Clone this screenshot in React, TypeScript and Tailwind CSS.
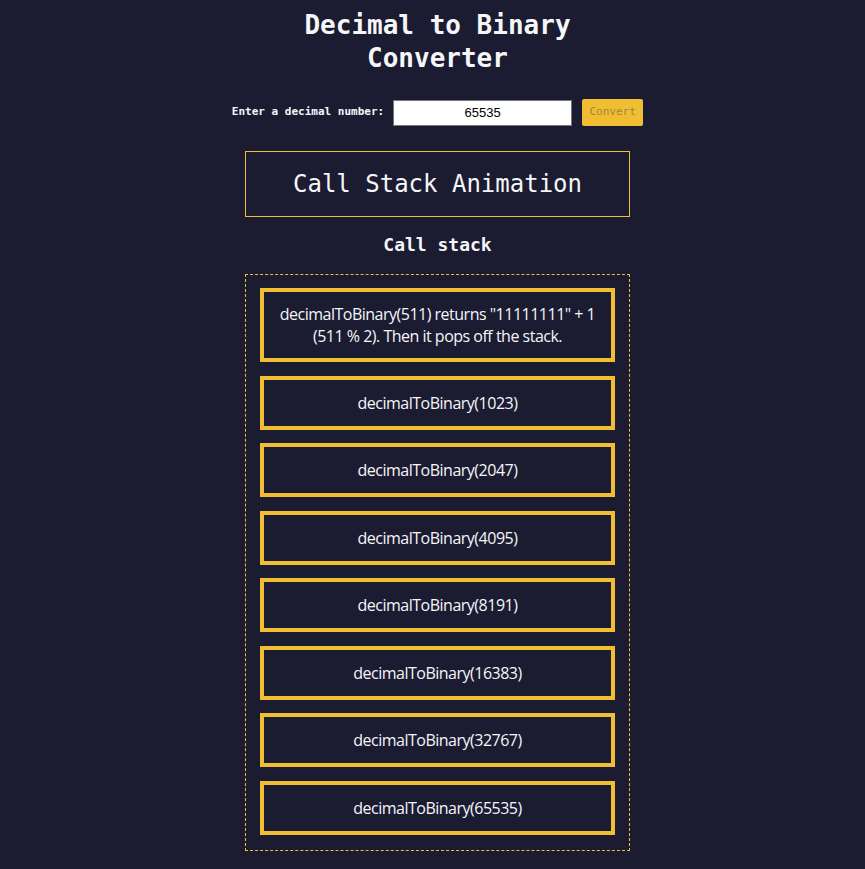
import React from 'react';

const frames = [1023, 2047, 4095, 8191, 16383, 32767, 65535];

const App = () => {
    return (
        <div className="min-h-screen w-full bg-[#1b1b32] text-[#f5f6f7] pl-[10px]">
            <main className="flex flex-col items-center">
                <h1 className="mt-[9px] max-w-[400px] text-center text-[26px] leading-[33px] font-bold font-['DejaVu_Sans_Mono',monospace]">
                    Decimal to Binary Converter
                </h1>

                {/* Input row */}
                <div className="mt-[24px] flex items-center">
                    <label className="text-[11px] font-semibold font-['DejaVu_Sans_Mono',monospace]">
                        Enter a decimal number:
                    </label>
                    <input
                        readOnly
                        value="65535"
                        className="ml-[9px] h-[26px] w-[179px] border border-[#767676] bg-white text-center text-[13px] text-black font-['Liberation_Sans',sans-serif] outline-none"
                    />
                    <button className="ml-[10px] h-[27px] w-[61px] rounded-[2px] bg-[#f1be32] text-[11px] text-[#9a8843] font-['DejaVu_Sans_Mono',monospace]">
                        Convert
                    </button>
                </div>

                {/* Animation box */}
                <div className="mt-[25px] flex h-[66px] w-[385px] items-center justify-center border border-[#f1be32]">
                    <p className="text-[24px] font-['DejaVu_Sans_Mono',monospace]">Call Stack Animation</p>
                </div>

                <h2 className="mt-[17px] text-[18px] leading-[22px] font-bold font-['DejaVu_Sans_Mono',monospace]">
                    Call stack
                </h2>

                {/* Call stack */}
                <div className="mt-[18px] mb-[19px] flex w-[385px] flex-col gap-[13.5px] border border-dashed border-[#f1be32] px-[14px] pt-[13px] pb-[15px]">
                    <div className="border-[4px] border-[#f1be32] px-[8px] py-[11px] text-center text-[16px] leading-[22px] tracking-[-0.5px] font-['Open_Sans',sans-serif]">
                        decimalToBinary(511) returns "11111111" + 1 (511 % 2). Then it pops off the stack.
                    </div>
                    {frames.map((n) => (
                        <div
                            key={n}
                            className="border-[4px] border-[#f1be32] px-[8px] py-[12px] text-center text-[16px] leading-[22px] tracking-[-0.5px] font-['Open_Sans',sans-serif]"
                        >
                            decimalToBinary({n})
                        </div>
                    ))}
                </div>
            </main>
        </div>
    );
};

export default App;
